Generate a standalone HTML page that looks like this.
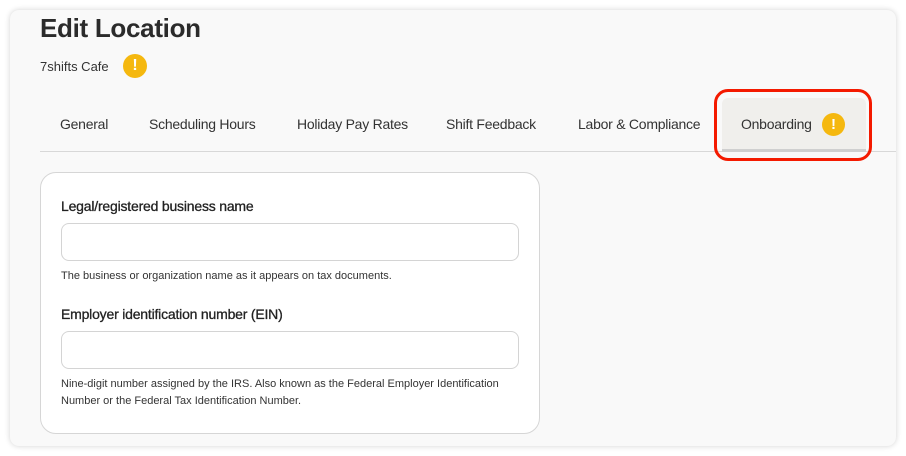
<!DOCTYPE html>
<html><head><style>
body{margin:0;width:906px;height:456px;background:#fff;font-family:"Liberation Sans",sans-serif;position:relative;overflow:hidden;color:#2b2b2b}
.panel{position:absolute;left:10px;top:10px;width:886px;height:436px;background:#f9f9f9;border-radius:9px;box-shadow:0 0 6px rgba(0,0,0,.18)}
.a{position:absolute;white-space:nowrap}
.badge{position:absolute;border-radius:50%;background:#f5b80f;color:#fff;font-weight:bold;text-align:center}
.tab{position:absolute;top:116px;font-size:14px;color:#333;letter-spacing:-0.25px;white-space:nowrap}
.inp{position:absolute;left:61px;width:456px;height:36px;border:1px solid #d4d4d4;border-radius:8px;background:#fff}
.lab{position:absolute;left:61px;font-size:14px;color:#222;letter-spacing:-0.2px;-webkit-text-stroke:0.3px #222}
.help{position:absolute;left:61px;font-size:11px;color:#333;line-height:17px}
</style></head><body>
<div class="panel"></div>
<div class="a" style="left:40px;top:13px;font-size:26px;font-weight:bold;letter-spacing:-0.3px;color:#2b2b2b">Edit Location</div>
<div class="a" style="left:40px;top:59px;font-size:13px;color:#333">7shifts Cafe</div>
<div class="badge" style="left:123px;top:54px;width:24px;height:24px;line-height:24px;font-size:16px">!</div>
<div class="tab" style="left:60px">General</div>
<div class="tab" style="left:149px">Scheduling Hours</div>
<div class="tab" style="left:297px">Holiday Pay Rates</div>
<div class="tab" style="left:446px">Shift Feedback</div>
<div class="tab" style="left:578px">Labor &amp; Compliance</div>
<div style="position:absolute;left:40px;top:151px;width:856px;height:1px;background:#d8d8d8"></div>
<div style="position:absolute;left:722px;top:98px;width:144px;height:51px;background:#f0efec;border-bottom:3px solid #cfcfcf;border-radius:6px 6px 0 0"></div>
<div class="tab" style="left:741px">Onboarding</div>
<div class="badge" style="left:822px;top:113px;width:23px;height:23px;line-height:23px;font-size:15px">!</div>
<div style="position:absolute;left:714px;top:89px;width:152px;height:66px;border:3px solid #f41a00;border-radius:14px"></div>
<div style="position:absolute;left:40px;top:172px;width:498px;height:260px;background:#fff;border:1px solid #d6d6d6;border-radius:16px"></div>
<div class="lab" style="top:198px">Legal/registered business name</div>
<div class="inp" style="top:223px"></div>
<div class="help" style="top:268px">The business or organization name as it appears on tax documents.</div>
<div class="lab" style="top:306px">Employer identification number (EIN)</div>
<div class="inp" style="top:331px"></div>
<div class="help" style="top:376px">Nine-digit number assigned by the IRS. Also known as the Federal Employer Identification<br>Number or the Federal Tax Identification Number.</div>
</body></html>
